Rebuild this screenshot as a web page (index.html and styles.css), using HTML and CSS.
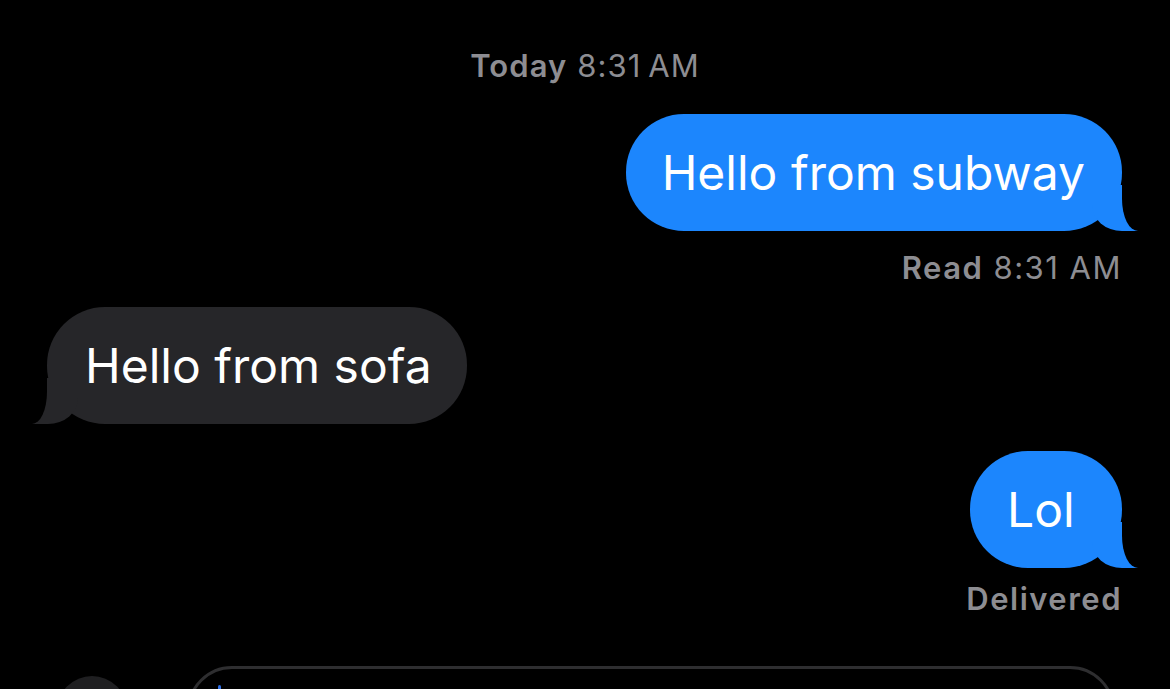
FILE: index.html
```html
<!DOCTYPE html>
<html lang="en">
<head>
<meta charset="utf-8">
<title>Messages</title>
<link rel="stylesheet" href="styles.css">
</head>
<body>
<div class="screen">
  <div class="timestamp"><span class="strong">Today</span> 8:31&#8239;AM</div>
  <div class="row out">
    <div class="bubble sent">Hello from subway</div>
  </div>
  <div class="status status-read"><span class="strong">Read</span> 8:31 AM</div>
  <div class="row in">
    <div class="bubble recv">Hello from sofa</div>
  </div>
  <div class="row out row-lol">
    <div class="bubble sent lol">Lol</div>
  </div>
  <div class="status status-delivered"><span class="strong">Delivered</span></div>
  <div class="composer">
    <div class="plus"></div>
    <div class="field"><span class="caret"></span></div>
  </div>
</div>
</body>
</html>
```
FILE: styles.css
```css
html, body {
  margin: 0;
  padding: 0;
  background: #000;
  height: 100%;
  overflow: hidden;
}

.screen {
  display: flex;
  flex-direction: column;
  font-family: Inter, "Noto Sans", "Liberation Sans", sans-serif;
  color: #fff;
}

.timestamp {
  margin-top: 47px;
  text-align: center;
  font-size: 31px;
  line-height: 38px;
  letter-spacing: 1.1px;
  color: #8d8d92;
}

.strong {
  font-weight: 600;
}

.row {
  display: flex;
}

.row.out {
  justify-content: flex-end;
  padding-right: 48px;
  margin-top: 29px;
}

.row.in {
  justify-content: flex-start;
  padding-left: 47px;
  margin-top: 21px;
}

.row.row-lol {
  margin-top: 27px;
}

.bubble {
  position: relative;
  font-size: 48px;
  line-height: 57px;
  padding: 30px 37px 30px 36px;
  border-radius: 58px;
  white-space: nowrap;
}

.bubble.sent {
  background: #1c86fd;
}

.bubble.recv {
  background: #262629;
  padding: 30px 35px 30px 38px;
}

.bubble.lol {
  box-sizing: border-box;
  min-width: 152px;
  padding-left: 37px;
}

/* tails */
.bubble::before,
.bubble::after {
  content: "";
  position: absolute;
  bottom: 0;
  height: 46px;
}

.bubble.sent::before {
  right: -16px;
  width: 46px;
  background: #1c86fd;
  border-bottom-left-radius: 30px 26px;
}

.bubble.sent::after {
  right: -46px;
  width: 46px;
  background: #000;
  border-bottom-left-radius: 16px 32px;
}

.bubble.recv::before {
  left: -15px;
  width: 46px;
  background: #262629;
  border-bottom-right-radius: 30px 26px;
}

.bubble.recv::after {
  left: -46px;
  width: 46px;
  background: #000;
  border-bottom-right-radius: 15px 32px;
}

.status {
  text-align: right;
  padding-right: 48px;
  font-size: 31px;
  line-height: 36px;
  letter-spacing: 1.5px;
  color: #8d8d92;
}

.status-read {
  margin-top: 19px;
}

.status-delivered {
  margin-top: 13px;
}

.composer {
  display: flex;
  align-items: flex-start;
  padding-left: 57px;
  padding-right: 55px;
  margin-top: 49px;
  gap: 60px;
}

.plus {
  flex: none;
  width: 70px;
  height: 70px;
  margin-top: 10px;
  border-radius: 50%;
  background: #1f1f21;
}

.field {
  flex: 1;
  height: 84px;
  border: 3px solid #2e2e30;
  border-radius: 46px;
  position: relative;
}

.caret {
  position: absolute;
  left: 28px;
  top: 16px;
  width: 3px;
  height: 40px;
  border-radius: 2px;
  background: #2f6fe6;
}
```
